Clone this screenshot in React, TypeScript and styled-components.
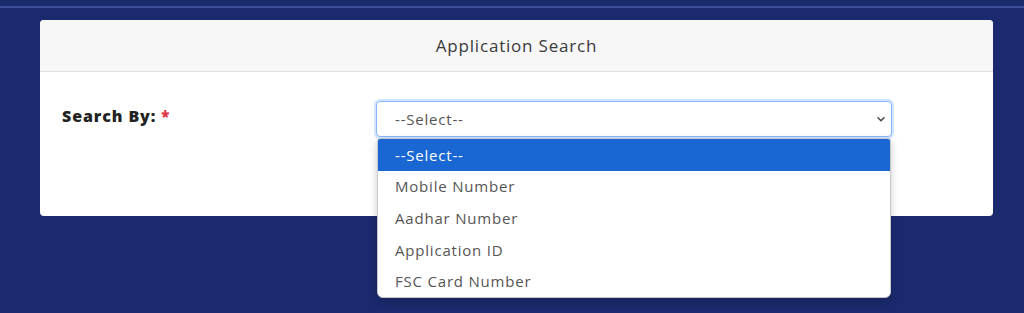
import React from "react";
import styled, { createGlobalStyle } from "styled-components";

const GlobalStyle = createGlobalStyle`
  html, body { margin: 0; padding: 0; }
  body {
    background: #1b2a6e;
    font-family: "Open Sans", "Liberation Sans", sans-serif;
  }
`;

const Page = styled.div`
  height: 313px;
  background: #1b2a6e;
  padding-top: 6px;
  box-sizing: border-box;
  overflow: hidden;
`;

const TopRule = styled.div`
  height: 2px;
  background: #3e4d98;
  margin-bottom: 12px;
`;

const Card = styled.section`
  margin: 0 31px 0 40px;
  background: #ffffff;
  border-radius: 4px;
`;

const CardHeader = styled.header`
  height: 52px;
  background: #f7f7f7;
  border-bottom: 1px solid #dedede;
  border-radius: 4px 4px 0 0;
  display: flex;
  align-items: center;
  justify-content: center;
  box-sizing: border-box;
`;

const Title = styled.h2`
  margin: 0;
  font-size: 17px;
  font-weight: 400;
  color: #3a3a3a;
  letter-spacing: 0.8px;
`;

const CardBody = styled.div`
  height: 144px;
  padding: 29px 0 0 22px;
  box-sizing: border-box;
  display: grid;
  grid-template-columns: 314px 516px;
  align-items: start;
`;

const Label = styled.label`
  font-size: 16px;
  font-weight: 800;
  color: #222;
  padding-top: 4px;
  letter-spacing: 0.9px;
`;

const Required = styled.span`
  color: #dc3545;
  margin-left: 5px;
  font-size: 15px;
`;

const SelectWrap = styled.div`
  position: relative;
`;

const SelectBox = styled.div`
  height: 36px;
  border: 1px solid #86b7fe;
  border-radius: 4px;
  box-shadow: 0 0 0 2px rgba(13, 110, 253, 0.18);
  display: flex;
  align-items: center;
  justify-content: space-between;
  padding: 0 4px 0 18px;
  box-sizing: border-box;
  font-size: 15px;
  color: #555;
  letter-spacing: 0.8px;
  background: #fff;
`;

const Menu = styled.ul`
  position: absolute;
  top: 37px;
  left: 1px;
  right: 1px;
  margin: 0;
  padding: 0;
  list-style: none;
  background: #fff;
  border: 1px solid #c8c8c8;
  border-radius: 3px 3px 6px 6px;
  box-shadow: 0 3px 8px rgba(0, 0, 0, 0.2);
  overflow: hidden;
`;

const Option = styled.li<{ $active?: boolean }>`
  height: 31.6px;
  display: flex;
  align-items: center;
  padding-left: 17px;
  font-size: 15px;
  letter-spacing: 0.8px;
  color: ${(p) => (p.$active ? "#fff" : "#555")};
  background: ${(p) => (p.$active ? "#1967d2" : "#fff")};
`;

const Chevron = () => (
  <svg width="12" height="12" viewBox="0 0 12 12" aria-hidden="true">
    <path d="M3 4.8 L6 7.8 L9 4.8" fill="none" stroke="#444" strokeWidth="1.5" strokeLinecap="round" strokeLinejoin="round" />
  </svg>
);

const options = ["--Select--", "Mobile Number", "Aadhar Number", "Application ID", "FSC Card Number"];

export default function App() {
  return (
    <>
      <GlobalStyle />
      <Page>
        <TopRule />
        <Card>
          <CardHeader>
            <Title>Application Search</Title>
          </CardHeader>
          <CardBody>
            <Label>
              Search By:<Required>*</Required>
            </Label>
            <SelectWrap>
              <SelectBox>
                <span>--Select--</span>
                <Chevron />
              </SelectBox>
              <Menu>
                {options.map((o, i) => (
                  <Option key={o} $active={i === 0}>
                    {o}
                  </Option>
                ))}
              </Menu>
            </SelectWrap>
          </CardBody>
        </Card>
      </Page>
    </>
  );
}
